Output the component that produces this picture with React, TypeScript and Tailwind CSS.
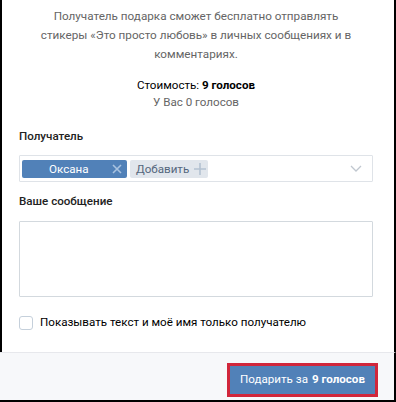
import React from "react";

export default function App() {
  return (
    <div
      className="w-[396px] h-[402px] flex flex-col bg-white text-[11.6px]"
      style={{ fontFamily: "Roboto, 'Open Sans', Arial, sans-serif" }}
    >
      <div className="h-[352px] border-l-2 border-r-2 border-black pl-[17px] pr-[21px] flex flex-col">
        <div className="pt-[7px] text-center leading-[19px] text-[11.7px] text-[#656565]">
          Получатель подарка сможет бесплатно отправлять
          <br />
          стикеры «Это просто любовь» в личных сообщениях и в
          <br />
          комментариях.
        </div>
        <div className="mt-[13px] text-center leading-[17px]">
          <div className="text-black">
            Стоимость: <b className="font-bold">9 голосов</b>
          </div>
          <div className="text-[#656565]">У Вас 0 голосов</div>
        </div>
        <div className="mt-[17px] leading-[17px] font-medium text-[#222]">Получатель</div>
        <div className="mt-[10px] h-[27px] border border-[#dfe3e8] rounded-[1px] flex items-center pl-[2px] pr-[10px] gap-[3px]">
          <div className="w-[105px] h-[18px] bg-[#5181b8] rounded-[2px] flex items-center pl-[27px] pr-[5px] text-white leading-[18px]">
            <span>Оксана</span>
            <svg className="ml-auto" width="10" height="10" viewBox="0 0 10 10">
              <path d="M1 1L9 9M9 1L1 9" stroke="#a9c3e0" strokeWidth="1.6" />
            </svg>
          </div>
          <div className="w-[78px] h-[18px] bg-[#e1e6ec] rounded-[2px] flex items-center pl-[6px] text-[#55677d] leading-[18px]">
            <span>Добавить</span>
            <svg className="ml-[5px]" width="12" height="12" viewBox="0 0 12 12">
              <path d="M6 0V12M0 6H12" stroke="#b4c2d1" strokeWidth="1.6" />
            </svg>
          </div>
          <svg className="ml-auto" width="12" height="7" viewBox="0 0 12 7">
            <path d="M1 1L6 6L11 1" stroke="#c0c7cf" strokeWidth="1.3" fill="none" />
          </svg>
        </div>
        <div className="mt-[11px] leading-[17px] font-medium text-[#222]">Ваше сообщение</div>
        <div className="mt-[11px] h-[76px] border border-[#d3d9de] rounded-[1px] bg-white" />
        <div className="mt-[18px] flex items-center gap-[7px] leading-[15px]">
          <div className="w-[14px] h-[14px] border border-[#c5d0db] rounded-[3px] bg-white" />
          <span className="text-black">Показывать текст и моё имя только получателю</span>
        </div>
      </div>
      <div className="flex-1 bg-[#f7f8fa] border-t border-t-[#e7e8ec] border-r-2 border-b-2 border-black flex items-start justify-end pr-[16px] pt-[10px]">
        <div className="border-[3px] border-[#d1263b] p-0">
          <div className="w-[145px] h-[28px] bg-[#5181b8] flex items-center justify-center text-white">
            Подарить за <b className="font-bold ml-[4px]">9 голосов</b>
          </div>
        </div>
      </div>
    </div>
  );
}
